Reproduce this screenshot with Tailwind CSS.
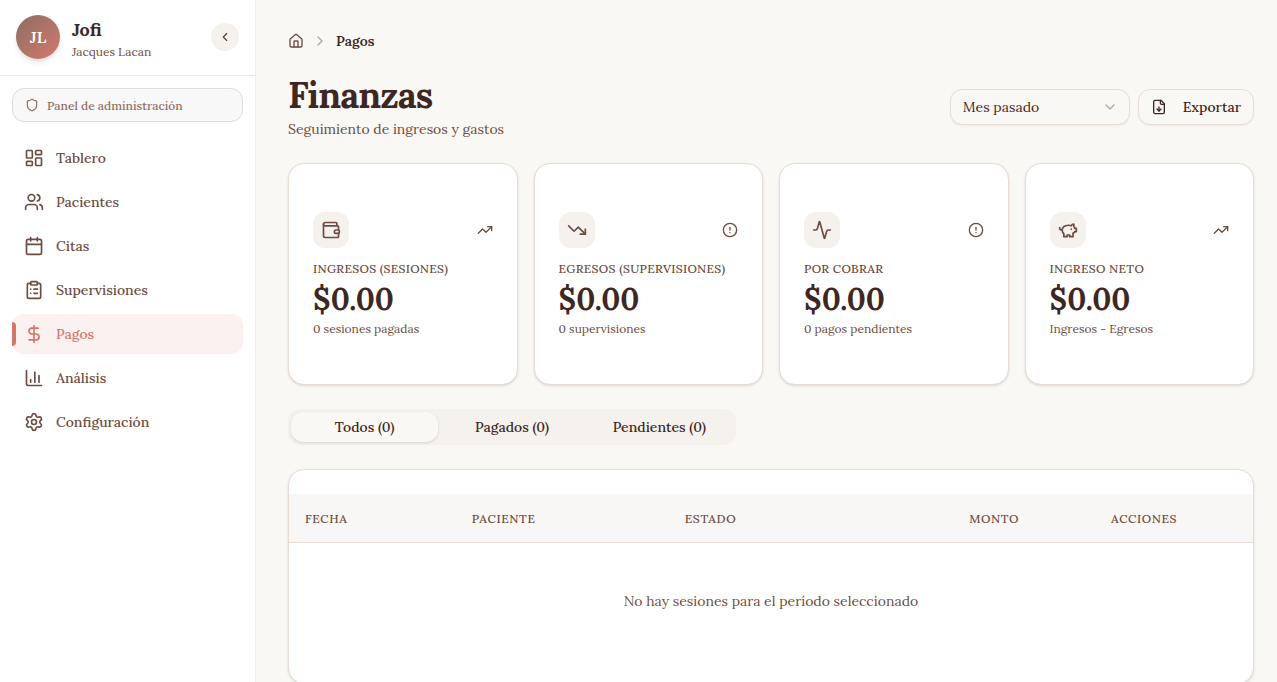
<!DOCTYPE html>
<html lang="es">
<head>
<meta charset="utf-8">
<meta name="viewport" content="width=device-width, initial-scale=1">
<title>Finanzas</title>
<script src="https://cdn.jsdelivr.net/npm/@tailwindcss/browser@4"></script>
</head>
<body class="flex h-screen overflow-hidden bg-[#faf8f5] font-['Lora','Liberation_Serif',serif] text-sm text-[#3e2723]">

<svg class="hidden">
  <symbol id="trending-up" viewBox="0 0 24 24"><path d="M16 7h6v6"/><path d="m22 7-8.500 8.500-5-5L2 17"/></symbol>
  <symbol id="alert" viewBox="0 0 24 24"><circle cx="12" cy="12" r="10"/><path d="M12 8v4M12 16h.01"/></symbol>
</svg>

<aside class="flex w-64 shrink-0 flex-col border-r border-[#f1eeea] bg-white">
  <div class="flex h-19 items-center gap-3 border-b border-[#ebe8e6] px-4 pb-px">
    <div class="flex size-11 shrink-0 items-center justify-center rounded-full bg-linear-to-br from-[#8d6e63] to-[#d4776b] text-base font-semibold text-white shadow-md">JL</div>
    <div class="flex-1 pt-0.5">
      <div class="text-lg leading-7 font-bold">Jofi</div>
      <div class="text-xs leading-4 text-[#6d4c41]">Jacques Lacan</div>
    </div>
    <button type="button" aria-label="Contraer menú" class="flex size-7 items-center justify-center rounded-full bg-[#f5f1ec] text-[#5d3a32]">
      <svg class="size-3.5 fill-none stroke-current stroke-2" stroke-linecap="round" stroke-linejoin="round" viewBox="0 0 24 24"><path d="m15 18-6-6 6-6"/></svg>
    </button>
  </div>
  <div class="p-3">
    <button type="button" class="flex h-[34px] w-full items-center gap-2 rounded-xl border border-[#e0dcd8] bg-[#f8f8f8] px-3 text-xs font-medium text-[#8d6e63]">
      <svg class="size-3.5 fill-none stroke-current stroke-2" stroke-linecap="round" stroke-linejoin="round" viewBox="0 0 24 24"><path d="M20 13c0 5-3.500 7.500-7.660 8.950a1 1 0 0 1-.67-.01C7.500 20.500 4 18 4 13V6a1 1 0 0 1 1-1c2 0 4.500-1.200 6.240-2.720a1.170 1.170 0 0 1 1.520 0C14.510 3.810 17 5 19 5a1 1 0 0 1 1 1z"/></svg>
      <span class="pt-0.5">Panel de administración</span>
    </button>
  </div>
  <nav class="flex flex-col gap-1 px-3 pt-1 font-medium text-[#6d4c41]">
    <a href="#" class="flex h-10 items-center gap-3 rounded-xl px-3">
      <svg class="size-5 fill-none stroke-current stroke-2" stroke-linecap="round" stroke-linejoin="round" viewBox="0 0 24 24"><rect width="7" height="9" x="3" y="3" rx="1"/><rect width="7" height="5" x="14" y="3" rx="1"/><rect width="7" height="9" x="14" y="12" rx="1"/><rect width="7" height="5" x="3" y="16" rx="1"/></svg>
      Tablero</a>
    <a href="#" class="flex h-10 items-center gap-3 rounded-xl px-3">
      <svg class="size-5 fill-none stroke-current stroke-2" stroke-linecap="round" stroke-linejoin="round" viewBox="0 0 24 24"><path d="M16 21v-2a4 4 0 0 0-4-4H6a4 4 0 0 0-4 4v2"/><circle cx="9" cy="7" r="4"/><path d="M22 21v-2a4 4 0 0 0-3-3.870"/><path d="M16 3.130a4 4 0 0 1 0 7.750"/></svg>
      Pacientes</a>
    <a href="#" class="flex h-10 items-center gap-3 rounded-xl px-3">
      <svg class="size-5 fill-none stroke-current stroke-2" stroke-linecap="round" stroke-linejoin="round" viewBox="0 0 24 24"><path d="M8 2v4M16 2v4"/><rect width="18" height="18" x="3" y="4" rx="2"/><path d="M3 10h18"/></svg>
      Citas</a>
    <a href="#" class="flex h-10 items-center gap-3 rounded-xl px-3">
      <svg class="size-5 fill-none stroke-current stroke-2" stroke-linecap="round" stroke-linejoin="round" viewBox="0 0 24 24"><rect width="8" height="4" x="8" y="2" rx="1"/><path d="M16 4h2a2 2 0 0 1 2 2v14a2 2 0 0 1-2 2H6a2 2 0 0 1-2-2V6a2 2 0 0 1 2-2h2"/><path d="M12 11h4M12 16h4M8 11h.01M8 16h.01"/></svg>
      Supervisiones</a>
    <a href="#" aria-current="page" class="relative flex h-10 items-center gap-3 rounded-xl bg-[#fbf1f0] px-3 text-[#d4776b]">
      <span class="absolute top-2 left-0 h-6 w-1 rounded-r-sm bg-[#d4776b]"></span>
      <svg class="size-5 fill-none stroke-current stroke-2" stroke-linecap="round" stroke-linejoin="round" viewBox="0 0 24 24"><path d="M12 2v20"/><path d="M17 5H9.500a3.500 3.500 0 0 0 0 7h5a3.500 3.500 0 0 1 0 7H6"/></svg>
      Pagos</a>
    <a href="#" class="flex h-10 items-center gap-3 rounded-xl px-3">
      <svg class="size-5 fill-none stroke-current stroke-2" stroke-linecap="round" stroke-linejoin="round" viewBox="0 0 24 24"><path d="M3 3v16a2 2 0 0 0 2 2h16"/><path d="M18 17V9M13 17V5M8 17v-3"/></svg>
      Análisis</a>
    <a href="#" class="flex h-10 items-center gap-3 rounded-xl px-3">
      <svg class="size-5 fill-none stroke-current stroke-2" stroke-linecap="round" stroke-linejoin="round" viewBox="0 0 24 24"><path d="M9.671 4.136a2.340 2.340 0 0 1 4.659 0 2.340 2.340 0 0 0 3.319 1.915 2.340 2.340 0 0 1 2.330 4.033 2.340 2.340 0 0 0 0 3.831 2.340 2.340 0 0 1-2.330 4.033 2.340 2.340 0 0 0-3.319 1.915 2.340 2.340 0 0 1-4.659 0 2.340 2.340 0 0 0-3.320-1.915 2.340 2.340 0 0 1-2.330-4.033 2.340 2.340 0 0 0 0-3.831A2.340 2.340 0 0 1 6.350 6.051a2.340 2.340 0 0 0 3.319-1.915"/><circle cx="12" cy="12" r="3"/></svg>
      Configuración</a>
  </nav>
</aside>

<main class="min-w-0 flex-1 overflow-hidden pt-[29px] pr-[23px] pl-8">
  <nav aria-label="Ruta" class="flex h-6 items-center gap-2">
    <a href="#" aria-label="Inicio" class="text-[#6d4c41]">
      <svg class="size-4 fill-none stroke-current stroke-2" stroke-linecap="round" stroke-linejoin="round" viewBox="0 0 24 24"><path d="M15 21v-8a1 1 0 0 0-1-1h-4a1 1 0 0 0-1 1v8"/><path d="M3 10a2 2 0 0 1 .709-1.528l7-6a2 2 0 0 1 2.582 0l7 6A2 2 0 0 1 21 10v9a2 2 0 0 1-2 2H5a2 2 0 0 1-2-2z"/></svg>
    </a>
    <svg class="size-4 fill-none stroke-[#b6a5a0] stroke-2" stroke-linecap="round" stroke-linejoin="round" viewBox="0 0 24 24"><path d="m9 18 6-6-6-6"/></svg>
    <span class="font-semibold">Pagos</span>
  </nav>

  <header class="mt-[22px] flex items-center justify-between">
    <div>
      <h1 class="mb-1 text-4xl leading-10 font-bold tracking-tight">Finanzas</h1>
      <p class="leading-5 text-[#6d4c41]">Seguimiento de ingresos y gastos</p>
    </div>
    <div class="flex gap-2">
      <div class="relative">
        <select aria-label="Período" class="h-9 w-[180px] appearance-none rounded-xl border border-[#e8ddd4] bg-[#faf8f5] px-3 shadow-xs">
          <option>Mes pasado</option>
        </select>
        <svg class="pointer-events-none absolute top-2.5 right-3 size-4 fill-none stroke-[#b6a5a0] stroke-2" stroke-linecap="round" stroke-linejoin="round" viewBox="0 0 24 24"><path d="m6 9 6 6 6-6"/></svg>
      </div>
      <button type="button" class="flex h-9 items-center gap-4 rounded-xl border border-[#e8ddd4] bg-[#faf8f5] px-3 font-medium shadow-xs">
        <svg class="size-4 fill-none stroke-current stroke-2" stroke-linecap="round" stroke-linejoin="round" viewBox="0 0 24 24"><path d="M15 2H6a2 2 0 0 0-2 2v16a2 2 0 0 0 2 2h12a2 2 0 0 0 2-2V7Z"/><path d="M14 2v4a2 2 0 0 0 2 2h4"/><path d="M12 18v-6"/><path d="m9 15 3 3 3-3"/></svg>
        Exportar
      </button>
    </div>
  </header>

  <section class="mt-6 grid grid-cols-4 gap-4">
    <article class="rounded-2xl border border-[#e8ddd4] bg-white px-6 pt-12 pb-[47px] shadow-sm">
      <div class="flex items-center justify-between text-[#6d4c41]">
        <span class="flex size-9 items-center justify-center rounded-xl bg-[#f5f1ec]">
          <svg class="size-5 fill-none stroke-current stroke-2" stroke-linecap="round" stroke-linejoin="round" viewBox="0 0 24 24"><path d="M19 7V4a1 1 0 0 0-1-1H5a2 2 0 0 0 0 4h15a1 1 0 0 1 1 1v4h-3a2 2 0 0 0 0 4h3a1 1 0 0 0 1-1v-2a1 1 0 0 0-1-1"/><path d="M3 5v14a2 2 0 0 0 2 2h15a1 1 0 0 0 1-1v-4"/></svg>
        </span>
        <svg class="size-4 fill-none stroke-current stroke-2" stroke-linecap="round" stroke-linejoin="round"><use href="#trending-up"/></svg>
      </div>
      <h2 class="mt-[13px] text-xs leading-4 font-medium tracking-wide whitespace-nowrap text-[#6d4c41]">INGRESOS (SESIONES)</h2>
      <p class="mt-1 text-3xl leading-9 font-bold">$0.00</p>
      <p class="mt-1 text-xs leading-4 text-[#6d4c41]">0 sesiones pagadas</p>
    </article>
    <article class="rounded-2xl border border-[#e8ddd4] bg-white px-6 pt-12 pb-[47px] shadow-sm">
      <div class="flex items-center justify-between text-[#6d4c41]">
        <span class="flex size-9 items-center justify-center rounded-xl bg-[#f5f1ec]">
          <svg class="size-5 fill-none stroke-current stroke-2" stroke-linecap="round" stroke-linejoin="round" viewBox="0 0 24 24"><path d="M16 17h6v-6"/><path d="m22 17-8.500-8.500-5 5L2 7"/></svg>
        </span>
        <svg class="size-4 fill-none stroke-current stroke-2" stroke-linecap="round" stroke-linejoin="round"><use href="#alert"/></svg>
      </div>
      <h2 class="mt-[13px] text-xs leading-4 font-medium tracking-wide whitespace-nowrap text-[#6d4c41]">EGRESOS (SUPERVISIONES)</h2>
      <p class="mt-1 text-3xl leading-9 font-bold">$0.00</p>
      <p class="mt-1 text-xs leading-4 text-[#6d4c41]">0 supervisiones</p>
    </article>
    <article class="rounded-2xl border border-[#e8ddd4] bg-white px-6 pt-12 pb-[47px] shadow-sm">
      <div class="flex items-center justify-between text-[#6d4c41]">
        <span class="flex size-9 items-center justify-center rounded-xl bg-[#f5f1ec]">
          <svg class="size-5 fill-none stroke-current stroke-2" stroke-linecap="round" stroke-linejoin="round" viewBox="0 0 24 24"><path d="M22 12h-2.480a2 2 0 0 0-1.930 1.460l-2.350 8.360a.25.25 0 0 1-.48 0L9.240 2.180a.25.25 0 0 0-.48 0l-2.350 8.360A2 2 0 0 1 4.490 12H2"/></svg>
        </span>
        <svg class="size-4 fill-none stroke-current stroke-2" stroke-linecap="round" stroke-linejoin="round"><use href="#alert"/></svg>
      </div>
      <h2 class="mt-[13px] text-xs leading-4 font-medium tracking-wide whitespace-nowrap text-[#6d4c41]">POR COBRAR</h2>
      <p class="mt-1 text-3xl leading-9 font-bold">$0.00</p>
      <p class="mt-1 text-xs leading-4 text-[#6d4c41]">0 pagos pendientes</p>
    </article>
    <article class="rounded-2xl border border-[#e8ddd4] bg-white px-6 pt-12 pb-[47px] shadow-sm">
      <div class="flex items-center justify-between text-[#6d4c41]">
        <span class="flex size-9 items-center justify-center rounded-xl bg-[#f5f1ec]">
          <svg class="size-5 fill-none stroke-current stroke-2" stroke-linecap="round" stroke-linejoin="round" viewBox="0 0 24 24"><path d="M19 5c-1.500 0-2.800 1.400-3 2-3.500-1.500-11-.3-11 5 0 1.800 0 3 2 4.500V20h4v-2h3v2h4v-4c1-.5 1.700-1 2-2h2v-4h-2c0-1-.5-1.500-1-2V5z"/><path d="M2 9v1c0 1.100.9 2 2 2h1"/><path d="M16 11h.01"/></svg>
        </span>
        <svg class="size-4 fill-none stroke-current stroke-2" stroke-linecap="round" stroke-linejoin="round"><use href="#trending-up"/></svg>
      </div>
      <h2 class="mt-[13px] text-xs leading-4 font-medium tracking-wide whitespace-nowrap text-[#6d4c41]">INGRESO NETO</h2>
      <p class="mt-1 text-3xl leading-9 font-bold">$0.00</p>
      <p class="mt-1 text-xs leading-4 text-[#6d4c41]">Ingresos - Egresos</p>
    </article>
  </section>

  <div role="tablist" class="mt-6 grid h-9 w-full max-w-md grid-cols-3 rounded-xl bg-[#f5f1ec] p-[3px] font-medium">
    <button type="button" role="tab" aria-selected="true" class="rounded-xl bg-[#faf8f5] shadow-sm">Todos (0)</button>
    <button type="button" role="tab" aria-selected="false" class="rounded-xl">Pagados (0)</button>
    <button type="button" role="tab" aria-selected="false" class="rounded-xl">Pendientes (0)</button>
  </div>

  <section class="mt-6 rounded-2xl border border-[#e8ddd4] bg-white py-6 shadow-sm">
    <table class="w-full table-fixed text-[#6d4c41]">
      <thead>
        <tr class="h-12 border-b border-[#e8ddd4] bg-[#f9f7f5] text-xs tracking-wider">
          <th scope="col" class="w-[17.3%] px-4 pt-0.5 text-left font-medium">FECHA</th>
          <th scope="col" class="w-[22.1%] px-4 pt-0.5 text-left font-medium">PACIENTE</th>
          <th scope="col" class="w-[19%] px-4 pt-0.5 text-left font-medium">ESTADO</th>
          <th scope="col" class="w-[19%] px-4 pt-0.5 text-right font-medium">MONTO</th>
          <th scope="col" class="px-4 pt-0.5 text-center font-medium">ACCIONES</th>
        </tr>
      </thead>
      <tbody>
        <tr><td colspan="5" class="px-4 py-12 text-center leading-5">No hay sesiones para el período seleccionado</td></tr>
      </tbody>
    </table>
  </section>
</main>
</body>
</html>
